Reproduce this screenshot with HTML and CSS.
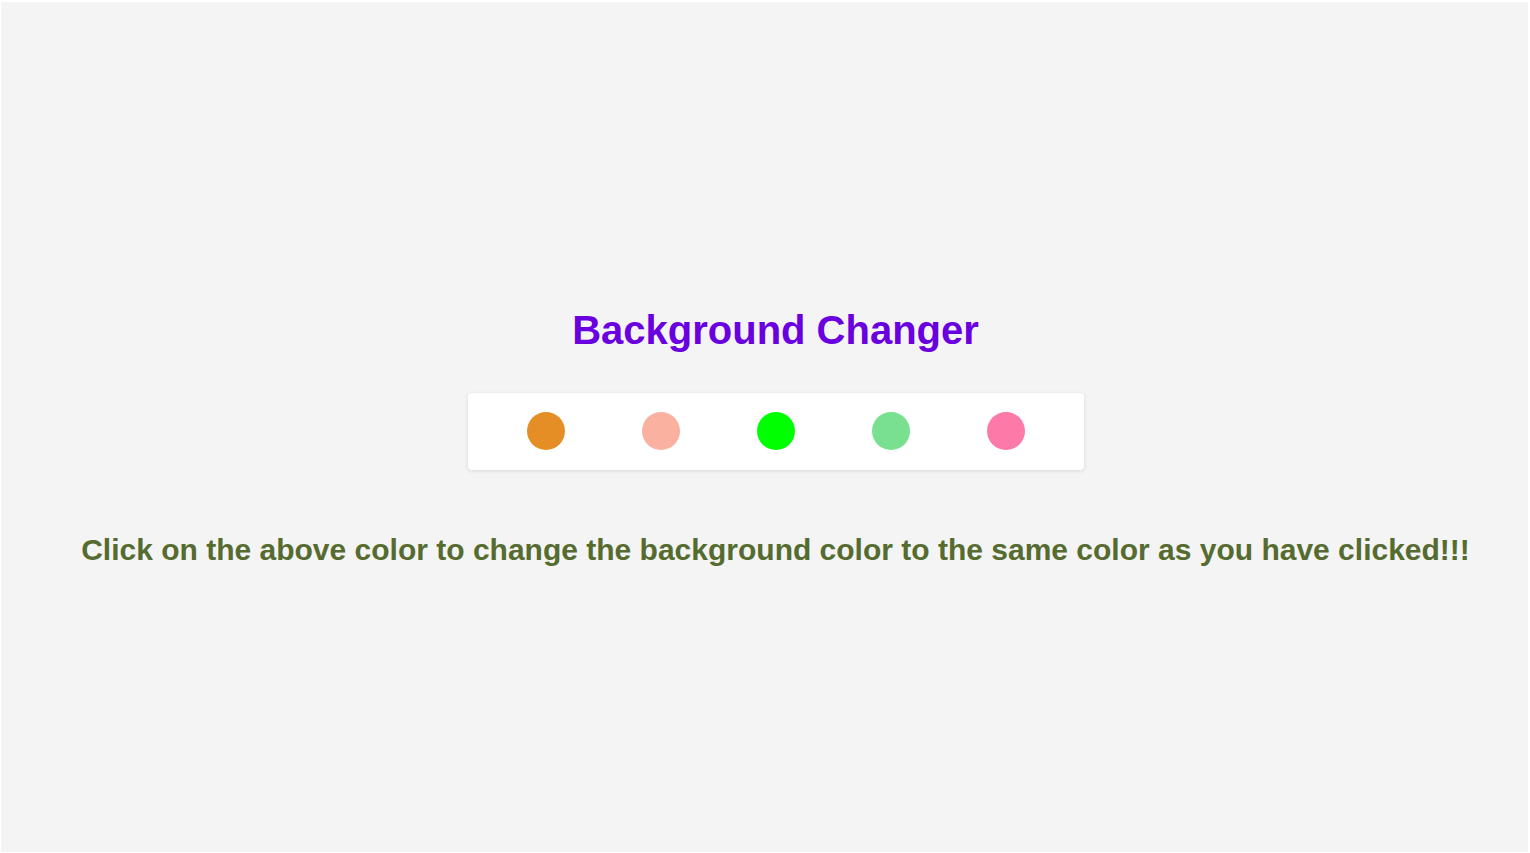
FILE: index.html
```html
<!DOCTYPE html>
<html lang="en">
<head>
<meta charset="utf-8">
<title>Background Changer</title>
<link rel="stylesheet" href="styles.css">
</head>
<body>
<main class="page">
  <h1 class="title">Background Changer</h1>
  <div class="palette">
    <button class="swatch swatch-carrot" aria-label="orange"></button>
    <button class="swatch swatch-peach" aria-label="peach"></button>
    <button class="swatch swatch-lime" aria-label="lime"></button>
    <button class="swatch swatch-mint" aria-label="mint"></button>
    <button class="swatch swatch-pink" aria-label="pink"></button>
  </div>
  <p class="hint">Click on the above color to change the background color to the same color as you have clicked!!!</p>
</main>
</body>
</html>
```
FILE: styles.css
```css
html, body {
  margin: 0;
  padding: 0;
  background: #ffffff;
}

.page {
  box-sizing: border-box;
  margin: 2px 2px 0 1px;
  height: 850px;
  background: #f4f4f4;
  padding: 305px 0 0 22px;
  display: flex;
  flex-direction: column;
  align-items: center;
  font-family: "Liberation Sans", Arial, sans-serif;
}

.title {
  margin: 0;
  font-size: 40px;
  line-height: 46px;
  font-weight: 700;
  color: #6a00e0;
}

.palette {
  margin-top: 40px;
  display: flex;
  gap: 77px;
  padding: 19px 59px 20px;
  background: #ffffff;
  border-radius: 4px;
  box-shadow: 0 1px 4px rgba(0, 0, 0, 0.12);
}

.swatch {
  width: 38px;
  height: 38px;
  border: none;
  padding: 0;
  border-radius: 50%;
  cursor: pointer;
}

.swatch-carrot { background: #e58e26; }
.swatch-peach { background: #fab1a0; }
.swatch-lime { background: #00ff00; }
.swatch-mint { background: #78e08f; }
.swatch-pink { background: #fd79a8; }

.hint {
  margin: 62px 0 0;
  font-size: 30px;
  line-height: 36px;
  font-weight: 700;
  color: #556b2f;
  text-align: center;
}
```
